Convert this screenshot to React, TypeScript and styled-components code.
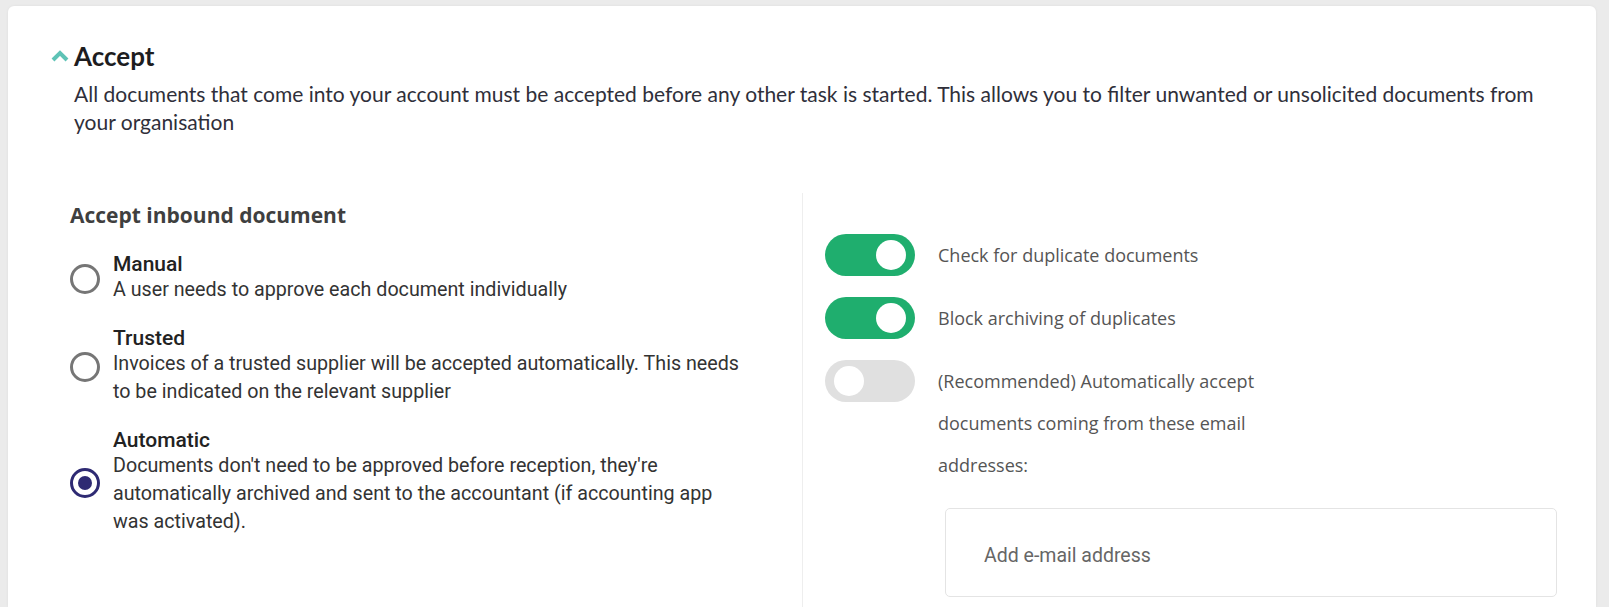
import React, { useState } from "react";
import styled, { createGlobalStyle } from "styled-components";

const GlobalStyle = createGlobalStyle`
  html, body {
    margin: 0;
    padding: 0;
    background: #ebebeb;
  }
  body {
    font-family: "Open Sans", "Liberation Sans", sans-serif;
  }
  * { box-sizing: border-box; }
`;

const Page = styled.div`
  padding: 6px 13px 0 8px;
  height: 607px;
  overflow: hidden;
  display: flex;
  flex-direction: column;
`;

const Card = styled.section`
  flex: 1;
  display: flex;
  flex-direction: column;
  background: #ffffff;
  border-radius: 6px 6px 0 0;
  box-shadow: 0 0 3px rgba(0, 0, 0, 0.06);
  padding: 34px 39px 0 43px;
`;

const Header = styled.div`
  display: flex;
  align-items: center;
  gap: 5px;
`;

const Chevron = styled.svg`
  width: 18px;
  height: 12px;
  margin-top: -1px;
  flex: none;
`;

const Title = styled.h2`
  margin: 0;
  font-family: Lato, "Liberation Sans", sans-serif;
  font-weight: 700;
  font-size: 26px;
  line-height: 32px;
  color: #1d1d1f;
`;

const Intro = styled.p`
  margin: 8px 0 0 23px;
  font-family: Lato, "Liberation Sans", sans-serif;
  font-size: 21px;
  line-height: 28px;
  color: #2f2f3a;
`;

const Columns = styled.div`
  flex: 1;
  display: grid;
  grid-template-columns: 732px 1fr;
  margin: 57px 0 0 19px;
`;

const LeftCol = styled.div`
  padding: 8px 52px 0 0;
`;

const GroupTitle = styled.h3`
  margin: 0;
  font-family: "Open Sans", "Liberation Sans", sans-serif;
  font-weight: 700;
  font-size: 21px;
  line-height: 28px;
  color: #3f3f3f;
`;

const Options = styled.div`
  display: flex;
  flex-direction: column;
  gap: 23px;
  margin-top: 24px;
`;

const Option = styled.label`
  display: flex;
  align-items: center;
  gap: 13px;
  cursor: pointer;
`;

const Radio = styled.span<{ $checked: boolean }>`
  flex: none;
  width: 30px;
  height: 30px;
  border-radius: 50%;
  border: 3px solid ${(p) => (p.$checked ? "#2e2a73" : "#767676")};
  display: flex;
  align-items: center;
  justify-content: center;
  &::after {
    content: "";
    width: 14px;
    height: 14px;
    border-radius: 50%;
    background: ${(p) => (p.$checked ? "#2e2a73" : "transparent")};
  }
`;

const OptionText = styled.div`
  display: flex;
  flex-direction: column;
  font-family: Roboto, "Liberation Sans", sans-serif;
`;

const OptionTitle = styled.span`
  font-weight: 500;
  font-size: 21px;
  line-height: 23px;
  color: #222222;
`;

const OptionDesc = styled.span`
  font-size: 19.7px;
  line-height: 28px;
  color: #333333;
`;

const RightCol = styled.div`
  border-left: 1px solid #eeeeee;
  padding: 41px 0 0 22px;
`;

const ToggleList = styled.div`
  display: flex;
  flex-direction: column;
  gap: 21px;
`;

const ToggleRow = styled.div`
  display: flex;
  align-items: flex-start;
  gap: 23px;
`;

const Switch = styled.button<{ $on: boolean }>`
  flex: none;
  width: 90px;
  height: 42px;
  border: none;
  border-radius: 21px;
  padding: 0 9px;
  background: ${(p) => (p.$on ? "#1fae6e" : "#e0e0e0")};
  display: flex;
  align-items: center;
  justify-content: ${(p) => (p.$on ? "flex-end" : "flex-start")};
  cursor: pointer;
  &::after {
    content: "";
    width: 30px;
    height: 30px;
    border-radius: 50%;
    background: #ffffff;
  }
`;

const ToggleLabel = styled.span`
  font-family: "Open Sans", "Liberation Sans", sans-serif;
  font-size: 18px;
  line-height: 42px;
  color: #555555;
  max-width: 340px;
`;

const EmailBox = styled.div`
  margin: 22px 0 0 120px;
  height: 89px;
  border: 1px solid #e4e4e4;
  border-radius: 5px;
  display: flex;
  align-items: center;
  padding: 6px 38px 0;
`;

const EmailInput = styled.input`
  border: none;
  outline: none;
  width: 100%;
  background: transparent;
  font-family: Roboto, "Liberation Sans", sans-serif;
  font-size: 19.5px;
  color: #333;
  padding: 0;
  &::placeholder {
    color: #666666;
  }
`;

const options = [
  {
    key: "manual",
    title: "Manual",
    desc: "A user needs to approve each document individually",
  },
  {
    key: "trusted",
    title: "Trusted",
    desc: "Invoices of a trusted supplier will be accepted automatically. This needs to be indicated on the relevant supplier",
  },
  {
    key: "automatic",
    title: "Automatic",
    desc: "Documents don't need to be approved before reception, they're automatically archived and sent to the accountant (if accounting app was activated).",
  },
];

export default function App() {
  const [mode, setMode] = useState("automatic");
  const [toggles, setToggles] = useState([true, true, false]);
  const labels = [
    "Check for duplicate documents",
    "Block archiving of duplicates",
    "(Recommended) Automatically accept documents coming from these email addresses:",
  ];

  return (
    <>
      <GlobalStyle />
      <Page>
        <Card>
          <Header>
            <Chevron viewBox="0 0 18 12">
              <path d="M2 10 L9 3 L16 10" fill="none" stroke="#5ec3b6" strokeWidth="4" strokeLinecap="butt" strokeLinejoin="miter" />
            </Chevron>
            <Title>Accept</Title>
          </Header>
          <Intro>
            All documents that come into your account must be accepted before any other task is started. This allows you to filter unwanted or unsolicited documents from your organisation
          </Intro>
          <Columns>
            <LeftCol>
              <GroupTitle>Accept inbound document</GroupTitle>
              <Options>
                {options.map((o) => (
                  <Option key={o.key} onClick={() => setMode(o.key)}>
                    <Radio $checked={mode === o.key} />
                    <OptionText>
                      <OptionTitle>{o.title}</OptionTitle>
                      <OptionDesc>{o.desc}</OptionDesc>
                    </OptionText>
                  </Option>
                ))}
              </Options>
            </LeftCol>
            <RightCol>
              <ToggleList>
                {labels.map((l, i) => (
                  <ToggleRow key={i}>
                    <Switch
                      $on={toggles[i]}
                      onClick={() => setToggles(toggles.map((t, j) => (j === i ? !t : t)))}
                    />
                    <ToggleLabel>{l}</ToggleLabel>
                  </ToggleRow>
                ))}
              </ToggleList>
              <EmailBox>
                <EmailInput placeholder="Add e-mail address" />
              </EmailBox>
            </RightCol>
          </Columns>
        </Card>
      </Page>
    </>
  );
}
